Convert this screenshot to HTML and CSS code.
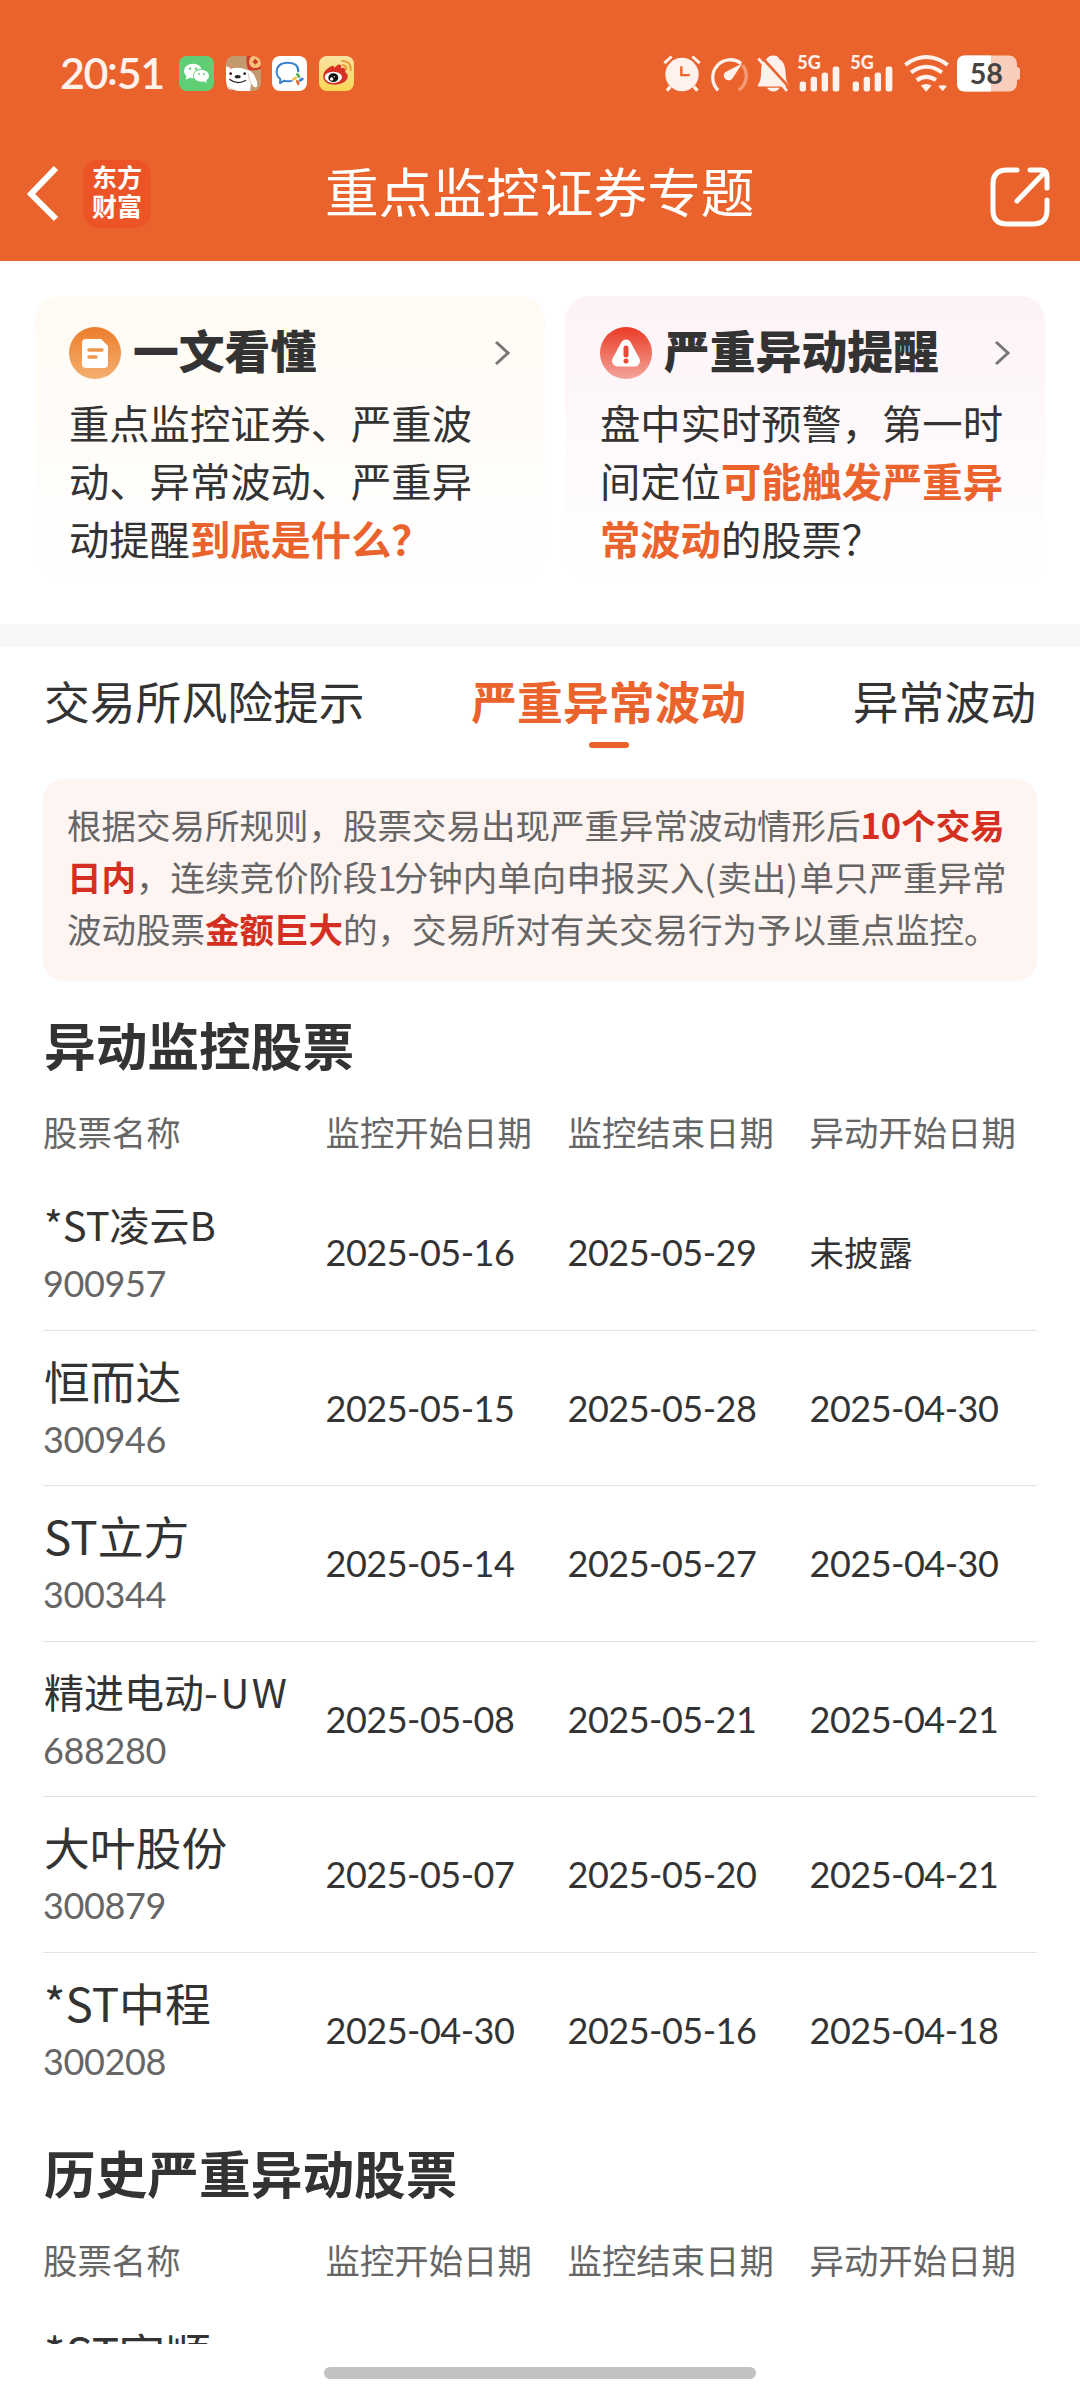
FILE: index.html
```html
<!DOCTYPE html>
<html lang="zh-CN">

<head>
    <meta charset="UTF-8">
    <meta name="viewport" content="width=device-width, initial-scale=1.0">
    <title>重点监控证券专题</title>
    <link rel="stylesheet" href="styles.css">
</head>

<body>
    <!-- Top area -->
    <header class="top">
        <div class="status-bar">
            <span class="time">20<span class="colon">:</span>51</span>
            <div class="app-icons">
                <svg width="35" height="35" viewBox="0 0 105 105">
                    <rect width="105" height="105" rx="24" fill="#5fce74"/>
                    <path d="M23 58l-3 13 13-6z" fill="#fff"/>
                    <ellipse cx="42" cy="45" rx="27" ry="22" fill="#fff"/>
                    <ellipse cx="67" cy="59" rx="25" ry="21" fill="#5fce74"/>
                    <ellipse cx="67" cy="59" rx="23" ry="18" fill="#fff"/>
                    <path d="M72 74l11 7-2-12z" fill="#fff"/>
                    <g fill="#5fce74"><circle cx="33" cy="38" r="3.5"/><circle cx="51" cy="38" r="3.5"/><circle cx="60" cy="54" r="3"/><circle cx="75" cy="54" r="3"/></g>
                </svg>
                <svg width="35" height="35" viewBox="0 0 105 105">
                    <defs><clipPath id="dog"><rect width="105" height="105" rx="24"/></clipPath></defs>
                    <g clip-path="url(#dog)">
                        <rect width="105" height="105" fill="#c39a6e"/>
                        <path d="M0 32q8-2 14 7 22-8 48 2 14 0 24 20 12 22 6 32-10 4-16-12l-4 24H8Q-4 78 0 32z" fill="#fff"/>
                        <path d="M67 52q2 20 8 30" stroke="#d8c8b8" stroke-width="3" fill="none"/>
                        <path d="M6 90q20 14 44 15H0z" fill="#e8dccf"/>
                        <path d="M0 98q20 2 30 7H0z" fill="#d43a2c"/>
                        <ellipse cx="35" cy="62" rx="9" ry="5" fill="#222"/>
                        <circle cx="14" cy="53" r="4" fill="#222"/><circle cx="56" cy="53" r="4" fill="#222"/>
                        <path d="M10 70q24 18 50 3" stroke="#222" stroke-width="3.5" fill="none"/>
                        <path d="M62 0h43v38q-20 8-38 4-8-18-5-42z" fill="#cf3d2b"/>
                        <circle cx="88" cy="17" r="19" fill="#f7c178"/>
                        <path d="M88 8l9 9-9 9-9-9z" fill="#cf3d2b"/>
                    </g>
                </svg>
                <svg width="35" height="35" viewBox="0 0 105 105">
                    <rect width="105" height="105" rx="24" fill="#fff"/>
                    <path d="M79 49Q80 20 47 20T14 49q0 12 11 20l-1 12 13-7q14 4 24 0" fill="none" stroke="#3c80cc" stroke-width="6" stroke-linejoin="round"/>
                    <g stroke-width="8" stroke-linecap="round">
                        <path d="M76 55l5 7" stroke="#53b04a"/><path d="M91 69l-7 4" stroke="#3c80cc"/>
                        <path d="M79 83l-3-7" stroke="#e9632c"/><path d="M64 70l7-4" stroke="#f3c33c"/>
                    </g>
                </svg>
                <svg width="35" height="35" viewBox="0 0 105 105">
                    <defs><linearGradient id="wb" x2="0" y2="1"><stop stop-color="#f9e3a4"/><stop offset="1" stop-color="#f9d655"/></linearGradient></defs>
                    <rect width="105" height="105" rx="24" fill="url(#wb)"/>
                    <path d="M12 62Q14 42 36 31q9-5 10 5 12-16 20-8 2 4-1 9 12-5 14 4v8q8 5 7 15-4 20-36 22-36 0-38-24z" fill="#d93025"/>
                    <ellipse cx="43" cy="64" rx="26" ry="17" fill="#fff"/>
                    <ellipse cx="43" cy="65" rx="15" ry="13" fill="#111"/>
                    <circle cx="38" cy="69" r="5" fill="#fff"/><circle cx="46" cy="62" r="2" fill="#fff"/>
                    <g fill="none" stroke="#eb9a35" stroke-width="6" stroke-linecap="round"><path d="M70 15q26-1 25 28"/><path d="M71 28q12 0 11 12"/></g>
                </svg>
            </div>
            <div class="sys-icons">
                <!-- alarm -->
                <svg width="38" height="37" viewBox="68 74 114 110">
                    <g stroke="#fff1ec" fill="none">
                        <path d="M72 98l22-20M178 98l-22-20" stroke-width="9"/>
                        <path d="M90 168l-10 13M161 168l10 13" stroke-width="10"/>
                    </g>
                    <circle cx="125" cy="132" r="50" fill="#fff1ec"/>
                    <path d="M123 107v27h25" fill="none" stroke="#eb632c" stroke-width="7"/>
                </svg>
                <!-- gauge -->
                <svg width="39" height="37" viewBox="206 74 119 110">
                    <path d="M234 180A54 54 0 0 1 304 98" fill="none" stroke="#fff1ec" stroke-width="10"/>
                    <path d="M309 104A54 54 0 0 1 297 180" fill="none" stroke="#f49b75" stroke-width="10"/>
                    <path d="M308 98l-31 47a14 14 0 1 1-22-20z" fill="#fff1ec"/>
                </svg>
                <!-- bell off -->
                <svg width="32" height="37" viewBox="350 74 96 110">
                    <path d="M353 168v-6q9-10 9-34 0-28 8-35 3-6 10-8 5-10 19-10t17 10q19 10 20 43 0 26 9 34v6z" fill="#fff1ec"/>
                    <path d="M380 172h38q-6 11-19 11t-19-11z" fill="#fff1ec"/>
                    <path d="M362 78l84 92" stroke="#eb632c" stroke-width="8"/>
                    <path d="M354 84l86 97" stroke="#fff1ec" stroke-width="8"/>
                </svg>
                <svg class="signal" width="43" height="37" viewBox="472 74 129 110">
                    <text x="473" y="115" class="net">5G</text>
                    <g fill="#fff1ec"><rect x="480" y="153" width="19" height="30" rx="7"/><rect x="513" y="139" width="19" height="44" rx="7"/><rect x="546" y="126" width="19" height="57" rx="7"/><rect x="579" y="108" width="20" height="75" rx="7"/></g>
                </svg>
                <svg class="signal" width="43" height="37" viewBox="472 74 129 110">
                    <text x="473" y="115" class="net">5G</text>
                    <g fill="#fff1ec"><rect x="480" y="153" width="19" height="30" rx="7"/><rect x="513" y="139" width="19" height="44" rx="7"/><rect x="546" y="126" width="19" height="57" rx="7"/><rect x="579" y="108" width="20" height="75" rx="7"/></g>
                </svg>
                <!-- wifi -->
                <svg class="wifi" width="45" height="37" viewBox="790 74 134 110">
                    <g fill="none" stroke="#fff1ec" stroke-width="12"><path d="M794 103q62-46 126 0"/><path d="M811 126q46-34 92 0"/><path d="M828 149q29-20 57 0"/></g>
                    <path d="M840 165q16-10 32 0l-16 18z" fill="#fff1ec"/>
                    <path d="M892 166q13-4 26 0l-13 16z" fill="#fff1ec"/>
                </svg>
                <!-- battery -->
                <svg class="battery" width="63" height="37" viewBox="951 74 189 110">
                    <rect x="1120" y="110" width="20" height="38" rx="8" fill="#f8cdbc"/>
                    <rect x="951" y="75" width="180" height="108" rx="24" fill="#f8cdbc"/>
                    <path d="M1053 75h-78q-24 0-24 24v60q0 24 24 24h78z" fill="#fff"/>
                    <text x="1039" y="159" class="level">58</text>
                </svg>
            </div>
        </div>
        <div class="nav-bar">
            <svg class="back" width="34" height="56" viewBox="0 0 34 56">
                <path d="M32 2L7 28l25 25" fill="none" stroke="#fff" stroke-width="6"/>
            </svg>
            <div class="logo"><span>东方</span><span>财富</span></div>
            <h1>重点监控证券专题</h1>
            <svg class="share" width="60" height="60" viewBox="0 0 60 60">
                <g fill="none" stroke="#fff" stroke-width="5" stroke-linecap="round" stroke-linejoin="round">
                    <path d="M27 3H17Q3 3 3 17v26q0 14 14 14h26q14 0 14-14V33"/>
                    <path d="M40 3h11q6 0 6 6v12M55 5L27 34"/>
                </g>
            </svg>
        </div>
    </header>

    <main class="content">
        <!-- Entry cards -->
        <section class="cards">
            <div class="card card-guide">
                <div class="card-head">
                    <svg width="52" height="52" viewBox="0 0 52 52">
                        <defs><linearGradient id="g1" x2="0" y2="1"><stop stop-color="#ed7d2b"/><stop offset="1" stop-color="#f3b070"/></linearGradient></defs>
                        <circle cx="26" cy="26" r="26" fill="url(#g1)"/>
                        <path d="M17 12h15l7 7v18q0 4-4 4H17q-4 0-4-4V16q0-4 4-4z" fill="#fff"/>
                        <path d="M20 23h13M20 30h7" stroke="#f0964a" stroke-width="3.4" stroke-linecap="round"/>
                    </svg>
                    <h2>一文看懂</h2>
                    <svg class="arrow" width="17" height="26" viewBox="0 0 17 26"><path d="M2 2l12 11L2 24" fill="none" stroke="#777" stroke-width="3"/></svg>
                </div>
                <p>重点监控证券、严重波<br>动、异常波动、严重异<br>动提醒<b>到底是什么？</b></p>
            </div>
            <div class="card card-alert">
                <div class="card-head">
                    <svg width="52" height="52" viewBox="0 0 52 52">
                        <defs><linearGradient id="g2" x2="0" y2="1"><stop stop-color="#ea3a24"/><stop offset="1" stop-color="#f3a59b"/></linearGradient></defs>
                        <circle cx="26" cy="26" r="26" fill="url(#g2)"/>
                        <path d="M26 18L17.500 34h17z" fill="#fff" stroke="#fff" stroke-width="11" stroke-linejoin="round"/>
                        <path d="M26 21v7" stroke="#e84a38" stroke-width="5" stroke-linecap="round"/><circle cx="26" cy="34" r="2.500" fill="#e84a38"/>
                    </svg>
                    <h2>严重异动提醒</h2>
                    <svg class="arrow" width="17" height="26" viewBox="0 0 17 26"><path d="M2 2l12 11L2 24" fill="none" stroke="#777" stroke-width="3"/></svg>
                </div>
                <p>盘中实时预警，第一时<br>间定位<b>可能触发严重异</b><br><b>常波动</b>的股票？</p>
            </div>
        </section>

        <!-- Tabs -->
        <nav class="tabs">
            <a class="tab">交易所风险提示</a>
            <a class="tab active">严重异常波动</a>
            <a class="tab">异常波动</a>
        </nav>

        <p class="notice">根据交易所规则，股票交易出现严重异常波动情形后<b>10个交易</b><br><b>日内</b>，连续竞价阶段<span class="one">1</span>分钟内单向申报买入<span class="paren">(</span>卖出<span class="paren">)</span>单只严重异常<br>波动股票<b>金额巨大</b>的，交易所对有关交易行为予以重点监控。</p>

        <!-- Monitored stocks -->
        <section class="stocks">
            <h3>异动监控股票</h3>
            <div class="row row-head"><span>股票名称</span><span>监控开始日期</span><span>监控结束日期</span><span>异动开始日期</span></div>
            <div class="row">
                <div class="stock"><span class="name small">*ST凌云B</span><span class="code">900957</span></div>
                <span class="date">2025-05-16</span><span class="date">2025-05-29</span><span class="none">未披露</span>
            </div>
            <div class="row">
                <div class="stock"><span class="name">恒而达</span><span class="code">300946</span></div>
                <span class="date">2025-05-15</span><span class="date">2025-05-28</span><span class="date">2025-04-30</span>
            </div>
            <div class="row">
                <div class="stock"><span class="name">ST立方</span><span class="code">300344</span></div>
                <span class="date">2025-05-14</span><span class="date">2025-05-27</span><span class="date">2025-04-30</span>
            </div>
            <div class="row">
                <div class="stock"><span class="name small">精进电动<span class="suffix">-UW</span></span><span class="code">688280</span></div>
                <span class="date">2025-05-08</span><span class="date">2025-05-21</span><span class="date">2025-04-21</span>
            </div>
            <div class="row">
                <div class="stock"><span class="name">大叶股份</span><span class="code">300879</span></div>
                <span class="date">2025-05-07</span><span class="date">2025-05-20</span><span class="date">2025-04-21</span>
            </div>
            <div class="row">
                <div class="stock"><span class="name">*ST中程</span><span class="code">300208</span></div>
                <span class="date">2025-04-30</span><span class="date">2025-05-16</span><span class="date">2025-04-18</span>
            </div>
        </section>

        <!-- History -->
        <section class="stocks history">
            <h3>历史严重异动股票</h3>
            <div class="row row-head"><span>股票名称</span><span>监控开始日期</span><span>监控结束日期</span><span>异动开始日期</span></div>
            <div class="row">
                <div class="stock"><span class="name">*ST宇顺</span></div>
            </div>
        </section>
    </main>

    <footer class="home"><div class="home-bar"></div></footer>
</body>

</html>
```

FILE: styles.css
```css
:root {
    --orange: #eb632c;
    --red: #d52f21;
    --text: #333;
    --sub: #666;
}

* {
    box-sizing: border-box;
    margin: 0;
    padding: 0;
}

body {
    width: 1080px;
    height: 2400px;
    overflow: hidden;
    display: flex;
    flex-direction: column;
    background: #fff;
    color: var(--text);
    font-family: "Noto Sans CJK SC", sans-serif;
    white-space: nowrap;
}

svg {
    display: block;
    flex: none;
}

/* Top area */
.top {
    height: 261px;
    flex: none;
    background: var(--orange);
}

.status-bar {
    display: flex;
    align-items: center;
    height: 146px;
    padding: 0 60px 0 60px;
}

.time {
    width: 119px;
    color: #fff1ec;
    font: 600 43px/50px Lato, sans-serif;
    letter-spacing: -1.4px;
}

.colon {
    position: relative;
    top: -4px;
}

.app-icons {
    display: flex;
    gap: 11.6px;
}

.sys-icons {
    display: flex;
    gap: 8.5px;
    margin-left: auto;
}

.signal {
    overflow: visible;
}

.signal + .signal {
    margin-left: 1.5px;
}

.wifi {
    margin-left: 2px;
}

.net {
    font: 900 54px Lato, sans-serif;
    fill: #fff1ec;
}

.level {
    font: bold 86px Lato, sans-serif;
    fill: #444;
    text-anchor: middle;
}

.nav-bar {
    display: flex;
    align-items: center;
    height: 96px;
    padding: 0 30px 0 24px;
}

.logo {
    display: flex;
    flex-direction: column;
    width: 68px;
    height: 68px;
    margin-left: 25px;
    padding-top: 2px;
    border-radius: 15px;
    background: #ec5428;
    color: #fff;
    font-size: 25px;
    font-weight: bold;
    line-height: 29px;
    text-align: center;
}

.nav-bar h1 {
    flex: 1;
    padding-left: 174px;
    color: #fff;
    font-size: 53.7px;
    font-weight: 400;
    line-height: 60px;
    margin-top: -8px;
}

.share {
    margin-top: 6px;
}

.content {
    height: 2083px;
    flex: none;
    overflow: hidden;
}

/* Entry cards */
.cards {
    display: flex;
    gap: 20px;
    height: 363px;
    padding: 35px 35px 0;
}

.card {
    height: 284px;
    padding: 31px 34px 0;
    border-radius: 24px;
}

.card-guide {
    width: 510px;
    background: linear-gradient(#fffaf3, #fff);
}

.card-alert {
    width: 480px;
    padding-left: 35px;
    background: linear-gradient(#fdf3f6, #fff);
}

.card-head {
    display: flex;
    align-items: center;
    height: 52px;
}

.card-head h2 {
    margin: -9px 0 0 12px;
    font-size: 45.8px;
    font-weight: 900;
    line-height: 52px;
}

.arrow {
    margin-left: auto;
}

.card p {
    margin-top: 14px;
    font-size: 40.3px;
    line-height: 58px;
}

.card b {
    color: var(--orange);
}

/* Tabs */
.tabs {
    display: flex;
    justify-content: space-between;
    height: 155px;
    padding: 25px 44px 0;
    border-top: 23px solid #f7f7fa;
}

.tab {
    display: flex;
    flex-direction: column;
    align-items: center;
    font-size: 45.8px;
    line-height: 56px;
}

.active {
    color: var(--orange);
    font-weight: bold;
}

.active::after {
    content: "";
    width: 40px;
    height: 6px;
    margin-top: 14px;
    border-radius: 3px;
    background: var(--orange);
}

.notice {
    width: 994px;
    height: 202px;
    margin-left: 43px;
    padding: 19px 24px;
    border-radius: 20px;
    background: #fef5f3;
    color: var(--sub);
    font-size: 34.5px;
    line-height: 52px;
}

.notice b {
    color: var(--red);
}

.one {
    letter-spacing: -3px;
}

.paren {
    letter-spacing: 1.5px;
}

/* Stock tables */
.stocks {
    padding: 31px 43px 0;
}

.stocks h3 {
    padding-left: 1px;
    font-size: 51.7px;
    line-height: 64px;
}

.row {
    display: grid;
    grid-template-columns: 282.5px 242px 242px 1fr;
    align-items: center;
    height: 155.5px;
    border-bottom: 1px solid #e3e3e3;
}

.row:last-child {
    border-bottom: none;
}

.row-head {
    height: 99px;
    padding-top: 10px;
    border-bottom: none;
    color: var(--sub);
    font-size: 34.4px;
}

.stock {
    display: flex;
    flex-direction: column;
    align-self: start;
    padding-top: 20px;
}

.name {
    padding-left: 1px;
    font-size: 45.8px;
    line-height: 58px;
}

.small {
    font-size: 40px;
}

.suffix {
    letter-spacing: 2.5px;
}

.code {
    color: var(--sub);
    font: 36px/60px Lato, sans-serif;
    letter-spacing: -0.4px;
}

.date {
    font: 36px/60px Lato, sans-serif;
    letter-spacing: -0.5px;
}

.none {
    font-size: 34.4px;
    line-height: 50px;
    padding-bottom: 3px;
}

.history {
    padding-top: 32px;
}

.home {
    padding-top: 23px;
}

.home-bar {
    width: 432px;
    height: 12px;
    margin: 0 auto;
    border-radius: 6px;
    background: #c1c1c1;
}
```
